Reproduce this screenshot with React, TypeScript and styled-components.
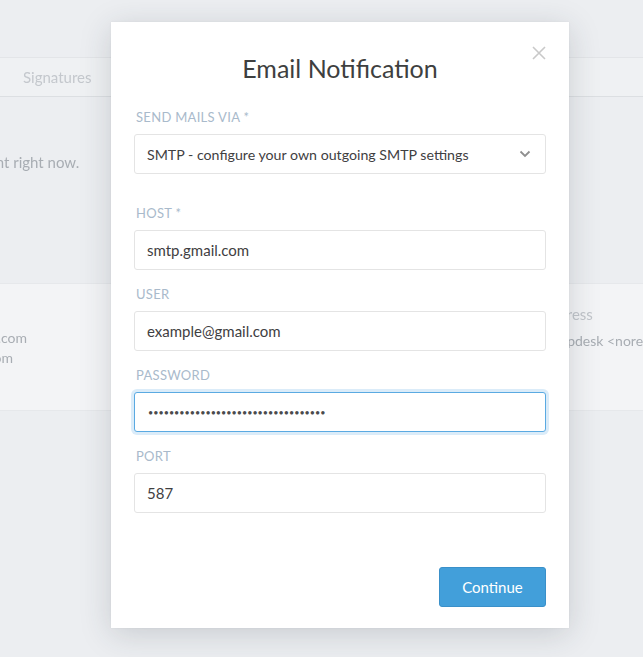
import React from 'react';
import styled, { createGlobalStyle } from 'styled-components';

const FONT = `Lato, "Open Sans", "Noto Sans", sans-serif`;

const GlobalStyle = createGlobalStyle`
  html, body {
    margin: 0;
    padding: 0;
    background: #eceef1;
    font-family: ${FONT};
  }
  * {
    box-sizing: border-box;
  }
`;

const Screen = styled.div`
  position: relative;
  width: 643px;
  height: 657px;
  overflow: hidden;
  background: #eceef1;
`;

/* The admin page that sits behind the dialog, faded and slightly blurred. */
const Backdrop = styled.div`
  display: flex;
  flex-direction: column;
  height: 100%;
  padding-top: 57px;
  filter: blur(0.6px);
  color: #a8adb3;
  font-size: 15px;
`;

const TabBar = styled.div`
  display: flex;
  height: 40px;
  align-items: center;
  padding-left: 23px;
  background: #eff1f3;
  border-top: 1px solid #e3e5e8;
  border-bottom: 1px solid #dcdfe2;
`;

const Tab = styled.span`
  color: #c4c8cd;
`;

const Hint = styled.p`
  margin: 55px 0 0 -150px;
  line-height: 20px;
  white-space: nowrap;
`;

const PanelRow = styled.div`
  display: flex;
  justify-content: space-between;
  margin-top: 111px;
  height: 128px;
  background: #f3f4f6;
  border-top: 1px solid #e6e8eb;
  border-bottom: 1px solid #e6e8eb;
`;

const AccountColumn = styled.div`
  display: flex;
  flex-direction: column;
  align-items: flex-end;
  width: 200px;
  margin-left: -173px;
  padding-top: 44px;
  line-height: 20px;
  white-space: nowrap;
  font-size: 14px;
`;

const AccountLine = styled.span<{ $inset?: number }>`
  margin-right: ${(p) => p.$inset ?? 0}px;
`;

const AddressColumn = styled.div`
  display: flex;
  flex-direction: column;
  width: 200px;
  margin-right: -103px;
  padding-top: 20px;
  line-height: 20px;
  white-space: nowrap;
  font-size: 14px;
`;

const PanelTitle = styled.span`
  font-size: 15px;
  color: #c1c5ca;
  margin: 0 0 7px -6px;
`;

/* Dialog */
const Modal = styled.div`
  position: absolute;
  left: 111px;
  top: 22px;
  width: 458px;
  height: 606px;
  background: #fff;
  box-shadow: 0 6px 30px rgba(40, 50, 60, 0.18), 0 0 2px rgba(0, 0, 0, 0.06);
  display: flex;
  flex-direction: column;
  padding: 0 23px 21px;
`;

const CloseButton = styled.button`
  position: absolute;
  top: 24px;
  right: 23px;
  width: 14px;
  height: 14px;
  padding: 0;
  border: 0;
  background: none;
  display: flex;
  cursor: pointer;
`;

const Title = styled.h1`
  margin: 30px 0 0;
  text-align: center;
  font-weight: 400;
  font-size: 25px;
  line-height: 32px;
  color: #3e3f40;
`;

const Form = styled.div`
  display: flex;
  flex-direction: column;
  margin-top: 25px;
`;

const Group = styled.div<{ $gapAfter?: number }>`
  display: flex;
  flex-direction: column;
  margin-bottom: ${(p) => p.$gapAfter ?? 16}px;
`;

const Label = styled.label`
  font-size: 13px;
  line-height: 17px;
  letter-spacing: 0.3px;
  text-transform: uppercase;
  color: #a9bacb;
  margin-bottom: 8px;
  padding-left: 2px;
`;

const fieldBase = `
  width: 100%;
  height: 40px;
  padding: 0 12px;
  border: 1px solid #e4e4e4;
  border-radius: 3px;
  background: #fff;
  font-family: ${FONT};
  font-size: 15px;
  color: #3f4042;
  outline: none;
`;

const Input = styled.input<{ $focused?: boolean }>`
  ${fieldBase}
  ${(p) =>
    p.$focused
      ? `
    border-color: #5aaae2;
    box-shadow: 0 0 0 3px rgba(90, 170, 226, 0.22);
  `
      : ''}
  &[type='password'] {
    font-size: 9px;
    padding-left: 13px;
    color: #4a4b4d;
  }
`;

const SelectWrap = styled.div`
  position: relative;
  display: flex;
`;

const Select = styled.select`
  ${fieldBase}
  appearance: none;
  padding-right: 40px;
  font-size: 14.2px;
`;

const Chevron = styled.svg`
  position: absolute;
  right: 15px;
  top: 16px;
  pointer-events: none;
`;

const Footer = styled.div`
  margin-top: auto;
  display: flex;
  justify-content: flex-end;
`;

const PrimaryButton = styled.button`
  width: 107px;
  height: 40px;
  border: 1px solid #3a90c9;
  border-radius: 3px;
  background: #429fda;
  color: #fff;
  font-family: ${FONT};
  font-size: 15px;
  cursor: pointer;
`;

export default function App() {
  return (
    <Screen>
      <GlobalStyle />
      <Backdrop>
        <TabBar>
          <Tab>Signatures</Tab>
        </TabBar>
        <Hint>There is no mail account right now.</Hint>
        <PanelRow>
          <AccountColumn>
            <AccountLine>support@example.com</AccountLine>
            <AccountLine $inset={14}>info@example.com</AccountLine>
          </AccountColumn>
          <AddressColumn>
            <PanelTitle>Address</PanelTitle>
            <span>Helpdesk &lt;noreply@example.com&gt;</span>
          </AddressColumn>
        </PanelRow>
      </Backdrop>

      <Modal>
        <CloseButton aria-label="Close">
          <svg width="14" height="14" viewBox="0 0 14 14">
            <path
              d="M1 1 L13 13 M13 1 L1 13"
              stroke="#c9c9c9"
              strokeWidth="1.6"
              fill="none"
            />
          </svg>
        </CloseButton>
        <Title>Email Notification</Title>
        <Form>
          <Group $gapAfter={31}>
            <Label>Send Mails via *</Label>
            <SelectWrap>
              <Select defaultValue="smtp">
                <option value="smtp">
                  SMTP - configure your own outgoing SMTP settings
                </option>
                <option value="sendmail">
                  Local MTA (Sendmail/Postfix/Exim/...)
                </option>
              </Select>
              <Chevron width="12" height="8" viewBox="0 0 12 8">
                <path
                  d="M1.5 1.5 L6 6 L10.5 1.5"
                  stroke="#8f8f8f"
                  strokeWidth="1.8"
                  fill="none"
                />
              </Chevron>
            </SelectWrap>
          </Group>
          <Group>
            <Label>Host *</Label>
            <Input defaultValue="smtp.gmail.com" />
          </Group>
          <Group>
            <Label>User</Label>
            <Input defaultValue="example@gmail.com" />
          </Group>
          <Group>
            <Label>Password</Label>
            <Input
              type="password"
              $focused
              defaultValue="examplepassword1234567890123456789"
            />
          </Group>
          <Group>
            <Label>Port</Label>
            <Input defaultValue="587" />
          </Group>
        </Form>
        <Footer>
          <PrimaryButton>Continue</PrimaryButton>
        </Footer>
      </Modal>
    </Screen>
  );
}
